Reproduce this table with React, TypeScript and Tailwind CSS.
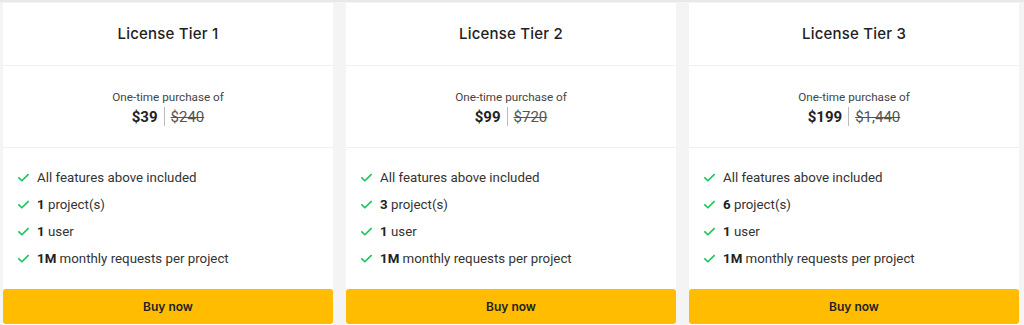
import React from 'react';

interface Tier {
  name: string;
  price: string;
  oldPrice: string;
  projects: string;
}

const tiers: Tier[] = [
  { name: 'License Tier 1', price: '$39', oldPrice: '$240', projects: '1' },
  { name: 'License Tier 2', price: '$99', oldPrice: '$720', projects: '3' },
  { name: 'License Tier 3', price: '$199', oldPrice: '$1,440', projects: '6' },
];

const Check: React.FC = () => (
  <svg className="w-[13px] h-[13px] shrink-0" viewBox="0 0 24 24" fill="none" stroke="#22c55e" strokeWidth="3.2" strokeLinecap="round" strokeLinejoin="round">
    <path d="M3.5 12.5l5.5 5.5L20.5 6.5" />
  </svg>
);

const App: React.FC = () => {
  return (
    <div className="w-[1024px] h-[325px] bg-[#f4f4f4] border-t-2 border-[#e8e8e8] flex gap-[13px] pl-[3px] pt-[1px] overflow-hidden" style={{ fontFamily: 'Roboto, "Open Sans", sans-serif' }}>
      {tiers.map((tier) => (
        <div key={tier.name} className="w-[330px] bg-white flex flex-col">
          {/* Header */}
          <div className="h-[63px] flex items-center justify-center border-b border-[#f0f0f0]">
            <h3 className="text-[15px] font-medium text-[#222] tracking-[0.2px]" style={{ fontFamily: 'Inter, Roboto, sans-serif' }}>{tier.name}</h3>
          </div>

          {/* Price */}
          <div className="h-[82px] flex flex-col items-center justify-center border-b border-[#f0f0f0] pt-[2px]">
            <p className="text-[11.7px] text-[#444] leading-[16px]">One-time purchase of</p>
            <div className="flex items-center mt-[2px]">
              <span className="text-[15px] font-bold text-[#222] leading-[20px]">{tier.price}</span>
              <span className="w-px h-[19px] bg-[#bbb] mx-[6px]" />
              <span className="text-[15px] text-[#555] line-through leading-[20px]">{tier.oldPrice}</span>
            </div>
          </div>

          {/* Features */}
          <ul className="flex-1 flex flex-col gap-[8px] pl-[14px] pt-[20px] text-[13.3px] text-[#333]">
            <li className="flex items-center gap-[7px] h-[19px]"><Check />All features above included</li>
            <li className="flex items-center gap-[7px] h-[19px]"><Check /><span><b className="font-bold text-[#222]">{tier.projects}</b> project(s)</span></li>
            <li className="flex items-center gap-[7px] h-[19px]"><Check /><span><b className="font-bold text-[#222]">1</b> user</span></li>
            <li className="flex items-center gap-[7px] h-[19px]"><Check /><span><b className="font-bold text-[#222]">1M</b> monthly requests per project</span></li>
          </ul>

          {/* Button */}
          <button className="h-[35px] mb-[1px] bg-[#ffbc00] rounded-[3px] text-[12px] font-semibold text-[#222]" style={{ fontFamily: 'Inter, Roboto, sans-serif' }}>
            Buy now
          </button>
        </div>
      ))}
    </div>
  );
};

export default App;
